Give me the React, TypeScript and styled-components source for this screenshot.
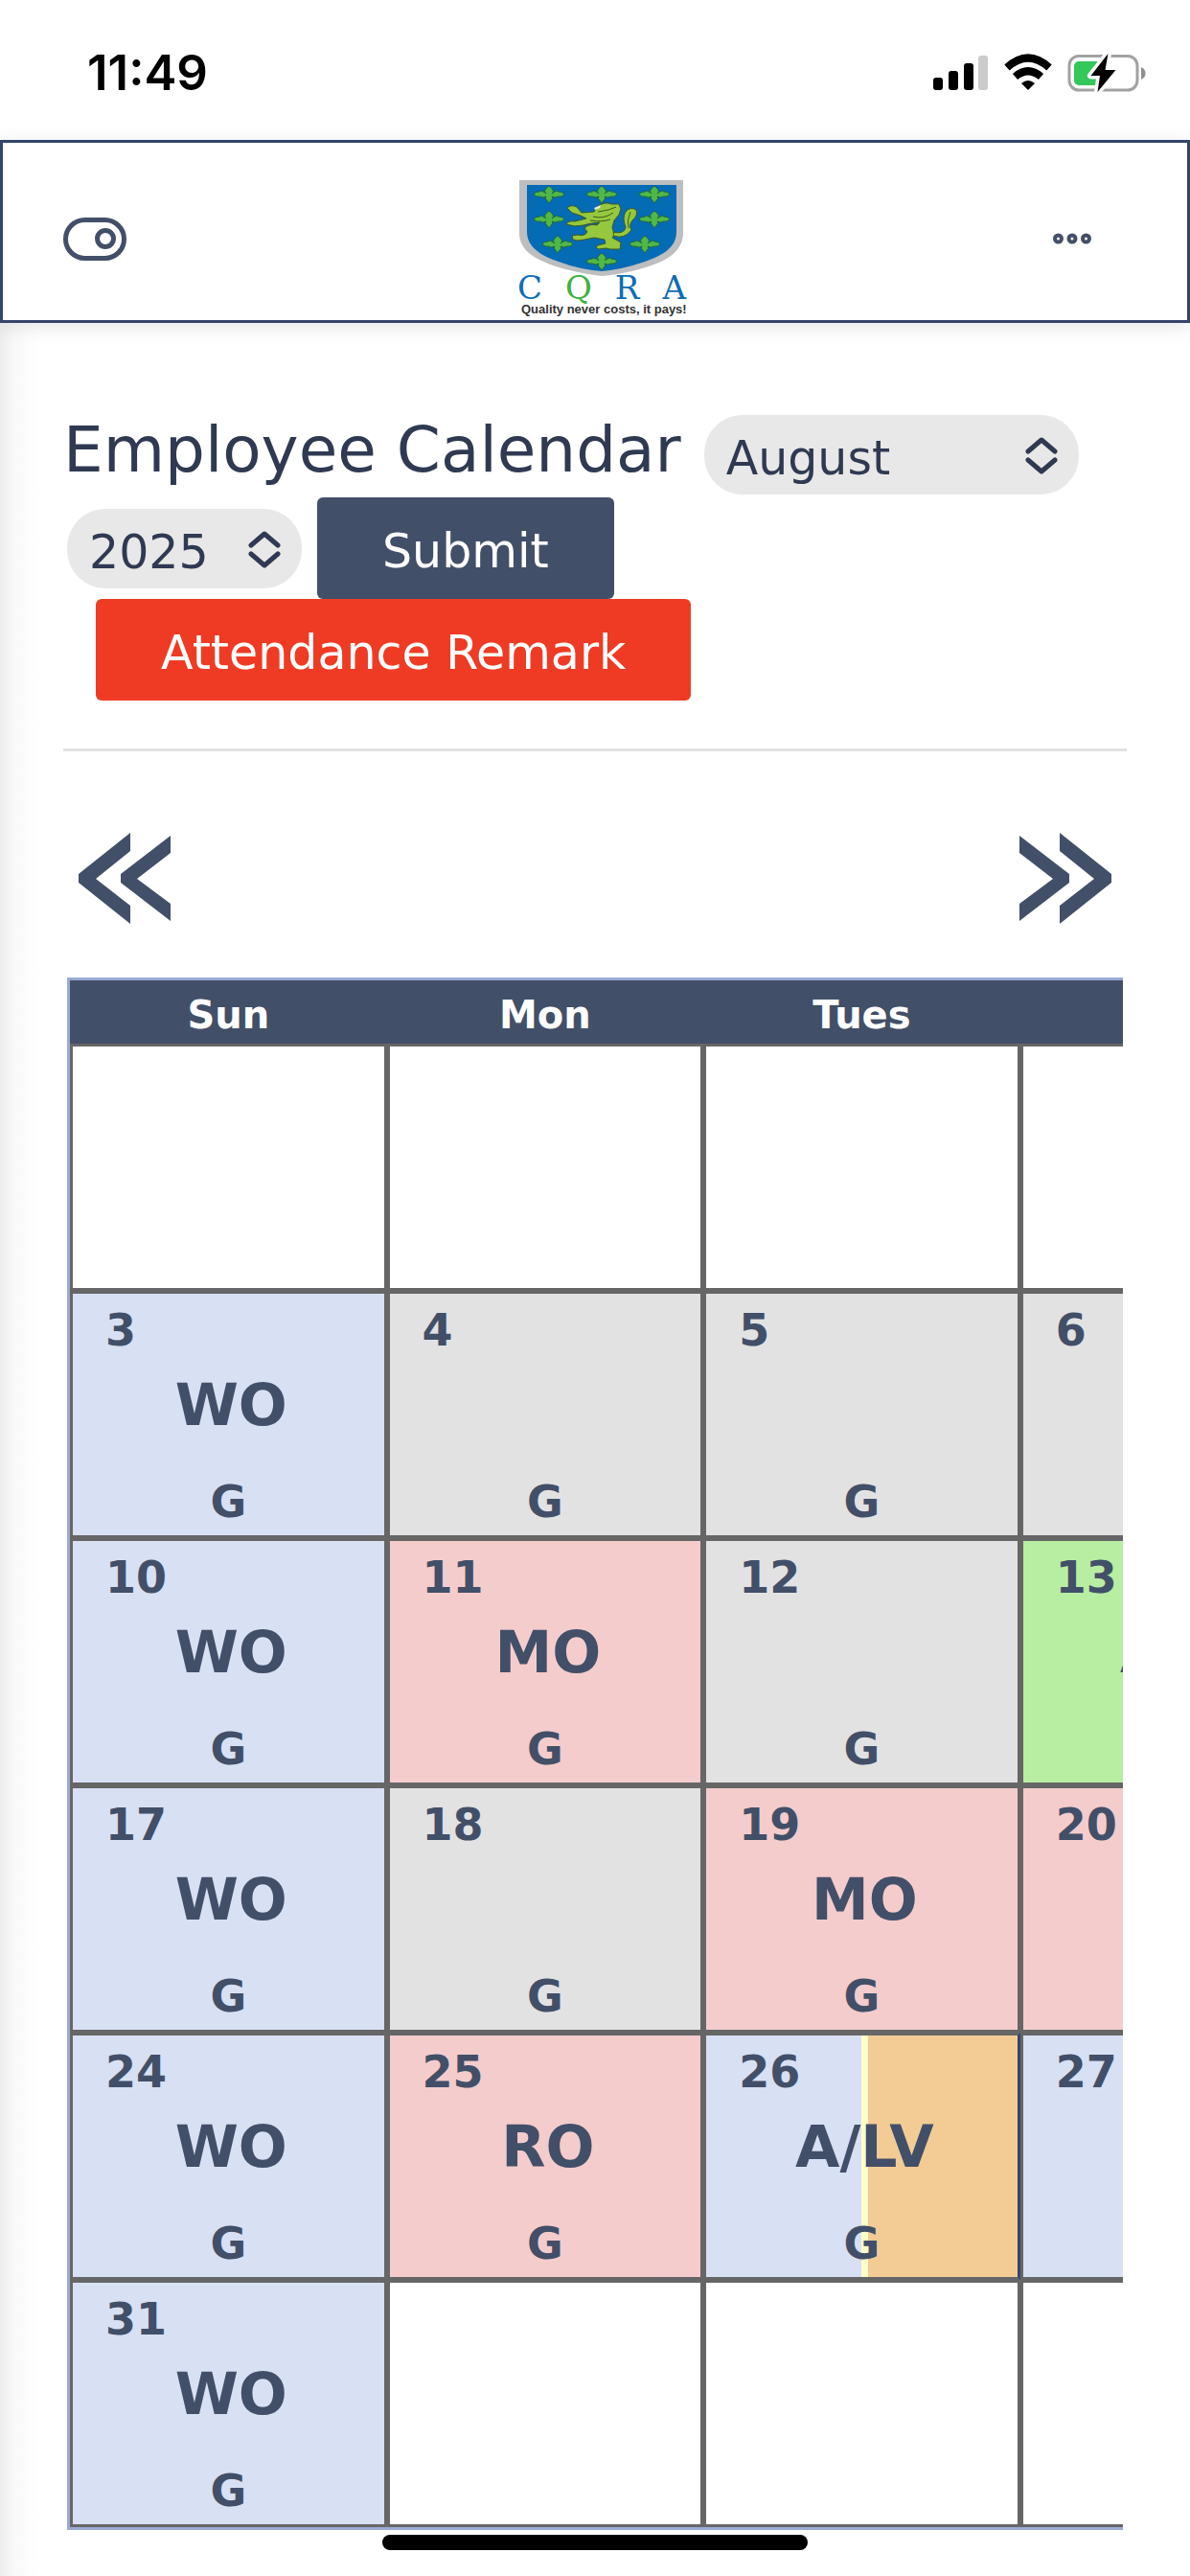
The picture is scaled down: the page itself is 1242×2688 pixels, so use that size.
import { useState } from "react";
import styled, { createGlobalStyle } from "styled-components";

const NAVY = "#424f68";
const INK = "#2f3a52";

const GlobalStyle = createGlobalStyle`
  * {
    box-sizing: border-box;
  }
  body {
    margin: 0;
    background: #fff;
    font-family: Verdana, "DejaVu Sans", sans-serif;
    color: ${INK};
  }
`;

const Page = styled.div`
  display: flex;
  flex-direction: column;
  min-height: 100vh;
`;

const StatusBar = styled.div`
  display: flex;
  align-items: center;
  justify-content: space-between;
  height: 146px;
  padding: 6px 46px 0 91px;
  color: #000;
`;

const Clock = styled.time`
  font: 600 51px/60px Inter, sans-serif;
`;

const Header = styled.header`
  position: relative;
  z-index: 1;
  display: grid;
  grid-template-columns: 1fr auto 1fr;
  align-items: center;
  padding-top: 38px;
  border: 3px solid #34456a;
  background: #fff;
  box-shadow: 0 4px 20px rgba(0, 0, 0, 0.1);
`;

const IconButton = styled.button<{ $end?: boolean }>`
  display: flex;
  justify-self: ${(props) => (props.$end ? "end" : "start")};
  margin: ${(props) => (props.$end ? "0 100px 24px 0" : "0 0 22px 63px")};
  padding: 0;
  border: 0;
  background: none;
`;

const Logo = styled.a`
  display: flex;
  flex-direction: column;
  width: 178px;
  height: 147px;
  margin-left: 16px;
  text-decoration: none;
`;

const LogoName = styled.span`
  display: flex;
  justify-content: space-between;
  width: 176px;
  height: 26px;
  font: 34px/22px "DejaVu Serif", serif;
  color: #0d6cb6;
`;

const LogoAccent = styled.span`
  color: #3fb13f;
`;

const LogoTagline = styled.span`
  padding-left: 4px;
  font: bold 13px/16px "Liberation Sans", sans-serif;
  white-space: nowrap;
  color: #333;
`;

const Main = styled.main`
  flex: 1;
  padding: 96px 66px 47px;
  background: linear-gradient(90deg, #ededed, #f8f8f8 14px, #fdfdfd 28px, #fff 45px);
`;

const FilterRow = styled.div<{ $align?: string }>`
  display: flex;
  align-items: ${(props) => props.$align || "center"};
  gap: ${(props) => (props.$align ? "24px" : "16px")};
  min-height: ${(props) => (props.$align ? "86px" : "106px")};
`;

const Title = styled.h1`
  margin: 0;
  font-size: 66px;
  font-weight: 400;
  line-height: 74px;
  white-space: nowrap;
`;

const SelectWrapper = styled.label<{ $width: string; $indent?: string }>`
  position: relative;
  width: ${(props) => props.$width};
  margin-left: ${(props) => props.$indent || "0"};

  svg {
    position: absolute;
    top: 22px;
    right: 22px;
    pointer-events: none;
  }
`;

const Select = styled.select`
  appearance: none;
  width: 100%;
  height: 83px;
  padding: 8px 60px 0 23px;
  border: 0;
  border-radius: 40px;
  background: #e8e8e8;
  font: inherit;
  font-size: 49px;
  color: ${INK};
`;

const Button = styled.button<{ $color: string; $indent?: string }>`
  height: 106px;
  margin-left: ${(props) => props.$indent || "0"};
  padding: 6px 68px 0;
  border: 0;
  border-radius: 6px;
  background: ${(props) => props.$color};
  font: inherit;
  font-size: 49px;
  color: #fff;
  white-space: nowrap;
`;

const Divider = styled.hr`
  height: 3px;
  margin: 50px 0 0;
  border: 0;
  background: #e2e2e2;
`;

const MonthNav = styled.nav`
  display: flex;
  justify-content: space-between;
  padding: 85px 16px 55px;
`;

const NavButton = styled.button`
  display: flex;
  padding: 0;
  border: 0;
  background: none;
`;

const CalendarScroll = styled.div`
  margin: 0 4px;
  overflow-x: auto;
  scrollbar-width: none;
`;

const Calendar = styled.table`
  width: 2320px;
  table-layout: fixed;
  border: 3px solid #9aaad4;
  border-collapse: separate;
  border-spacing: 0;
  font-weight: 700;
  color: ${NAVY};
`;

const DayHeading = styled.th`
  height: 66px;
  padding: 5px 0 0;
  background: ${NAVY};
  font-size: 40px;
  line-height: 60px;
  color: #fff;
`;

type Status = "none" | "off" | "present" | "miss" | "approved" | "half";

const backgrounds: Record<Status, string> = {
  none: "#fff",
  off: "#d8e0f3",
  present: "#e2e2e2",
  miss: "#f4cccc",
  approved: "#b8eea1",
  half: "linear-gradient(90deg, #d8e0f3 50%, #ffffc8 50%, #ffffc8 52%, #f3cc95 52%)",
};

const DayCell = styled.td<{ $status: Status }>`
  height: 258px;
  padding: 0;
  border: 3px solid #666;
  border-right-color: ${(props) => (props.$status === "half" ? "#34456a" : "#666")};
  background: ${(props) => backgrounds[props.$status]};
  background-origin: padding-box;
  vertical-align: top;
`;

const DayNumber = styled.div`
  height: 76px;
  padding-left: 34px;
  font-size: 46px;
  line-height: 76px;
`;

const DayCode = styled.div`
  height: 78px;
  padding-left: 6px;
  font-size: 60px;
  line-height: 80px;
  text-align: center;
`;

const DayShift = styled.div`
  height: 98px;
  padding-top: 28px;
  font-size: 46px;
  line-height: 70px;
  text-align: center;
`;

const HomeIndicator = styled.div`
  position: fixed;
  bottom: 27px;
  left: 0;
  right: 0;
  z-index: 2;
  width: 444px;
  height: 16px;
  margin: 0 auto;
  border-radius: 8px;
  background: #000;
`;

const StatusIcons = () => (
  <svg width="222" height="42" viewBox="973 55 222 42" aria-hidden="true">
    <rect x="973" y="81" width="10" height="13" rx="3" />
    <rect x="989" y="74" width="10" height="20" rx="3" />
    <rect x="1005" y="66" width="10" height="28" rx="3" />
    <rect x="1020" y="58" width="10" height="36" rx="3" fill="#cbcbcb" />
    <path d="M1050 70.500Q1072 50.500 1094 70.500" fill="none" stroke="#000" strokeWidth="8" />
    <path d="M1058.500 80Q1072 68.500 1085.500 80" fill="none" stroke="#000" strokeWidth="8" />
    <path d="M1065 87Q1072 81 1079 87L1072 94Z" />
    <rect x="1115" y="58.500" width="71" height="35.500" rx="10" fill="none" stroke="#a2a2a2" strokeWidth="3" />
    <path d="M1190 70Q1194.500 72 1194.500 76.500T1190 83Z" fill="#8f8f8f" />
    <rect x="1120" y="64" width="31" height="25" rx="5" fill="#34c759" />
    <path
      d="M1155.500 56L1137.500 79H1147L1144.500 96L1163.500 73H1152.500Z"
      stroke="#fff"
      strokeWidth="7"
      strokeLinejoin="round"
    />
    <path d="M1155.500 56L1137.500 79H1147L1144.500 96L1163.500 73H1152.500Z" />
  </svg>
);

const fleurs = [
  [33, 15],
  [88, 15],
  [143, 15],
  [33, 41],
  [143, 41],
  [42, 67],
  [133, 67],
  [88, 85],
];

const Crest = () => (
  <svg width="178" height="102" viewBox="0 -1 178 102" aria-hidden="true">
    <path
      d="M2 0H173V55C173 74 156 84 137 90Q112 98 88 100Q62 97 40 90C18 82 2 74 2 55Z"
      fill="#bcbec0"
    />
    <path
      d="M10 5H166V54C166 71 150 79 133 85Q110 93 88 95Q64 93 43 85C25 79 10 70 10 54Z"
      fill="#046bb5"
    />
    {fleurs.map(([x, y]) => (
      <path
        key={`${x}-${y}`}
        transform={`translate(${x} ${y})`}
        d="M0-9Q7-4 3-1Q8-5 10-3Q15-3 16 0Q13 3 10 2Q6 4 3 2Q5 5 3 5L0 9L-3 5Q-5 5-3 2Q-6 4-10 2Q-13 3-16 0Q-15-3-10-3Q-8-5-3-1Q-7-4 0-9Z"
        fill="#4fb848"
        stroke="#24663b"
        strokeWidth="1"
      />
    ))}
    <g fill="#95c83d" stroke="#3f5a1d" strokeWidth="1" strokeLinejoin="round">
      <path d="M98 54Q112 57 113 49Q109 39 113 33Q118 27 124 31Q126 37 120 42Q116 47 119 52Q112 62 100 58Z" />
      <path d="M84 27Q92 22 98 25L106 25L108 30L106 36L101 42L99 49Q102 58 99 60L108 65L107 72L97 72L92 71L85 72Q80 70 84 68L92 66L91 62L80 60L70 62Q62 64 58 62L57 58L63 57Q70 59 73 54L70 50Q75 45 83 47L86 44Q75 45 69 47L60 48L51 46Q53 42 60 43L72 40L66 37L57 34L52 29Q56 25 62 28L67 34L80 33Z" />
      <path d="M84 33L95 31L103 28M79 38Q90 41 100 34M76 42Q88 44 97 41M118 33Q114 42 116 50" fill="none" />
    </g>
    <path d="M80 29L87 26L86 29L81 31Z" fill="#e8e8e8" />
  </svg>
);

const Updown = () => (
  <svg width="34" height="40" viewBox="0 0 34 40" fill="none" stroke={INK} strokeWidth="5" strokeLinecap="round" strokeLinejoin="round" aria-hidden="true">
    <path d="M3 16L17 4L31 16M3 25L17 37L31 25" />
  </svg>
);

const DoubleArrow = ({ flip }: { flip?: boolean }) => (
  <svg width="96" height="96" viewBox="0 0 96 96" fill={NAVY} aria-hidden="true">
    <g transform={flip ? "translate(96 0) scale(-1 1)" : undefined}>
      <path d="M54 0V19L18 48L54 76V95L0 52V43Z" />
      <path d="M96 3V21L61 48L96 74V92L44 52V43Z" />
    </g>
  </svg>
);

const dayNames = ["Sun", "Mon", "Tues", "Wed", "Thur", "Fri", "Sat"];
const months = [
  "January", "February", "March", "April", "May", "June",
  "July", "August", "September", "October", "November", "December",
];

const marks: Record<number, { status: Status; code: string }> = {
  11: { status: "miss", code: "MO" },
  13: { status: "approved", code: "A/M" },
  19: { status: "miss", code: "MO" },
  20: { status: "miss", code: "" },
  25: { status: "miss", code: "RO" },
  26: { status: "half", code: "A/LV" },
  27: { status: "off", code: "" },
};

// 1 August 2025 falls on a Friday
const FIRST_DAY = 5;
const weeks = Array.from({ length: 6 }, (_, week) =>
  Array.from({ length: 7 }, (_, day) => {
    const date = week * 7 + day - FIRST_DAY + 1;
    return date > 0 && date <= 31 ? date : null;
  })
);

const Day = ({ date, sunday }: { date: number | null; sunday: boolean }) => {
  if (!date) {
    return <DayCell $status="none" />;
  }

  const mark =
    marks[date] ||
    (sunday ? { status: "off", code: "WO" } : { status: "present", code: "" });

  return (
    <DayCell $status={mark.status as Status}>
      <DayNumber>{date}</DayNumber>
      <DayCode>{mark.code}</DayCode>
      <DayShift>G</DayShift>
    </DayCell>
  );
};

const App = () => {
  const [month, setMonth] = useState("August");
  const [year, setYear] = useState("2025");

  return (
    <Page>
      <GlobalStyle />
      <StatusBar>
        <Clock>11:49</Clock>
        <StatusIcons />
      </StatusBar>
      <Header>
        <IconButton type="button" aria-label="Toggle menu">
          <svg width="66" height="45" viewBox="0 0 66 45" fill="none" stroke={NAVY} strokeWidth="5">
            <rect x="2.500" y="2.500" width="61" height="40" rx="20" />
            <circle cx="44" cy="22" r="8.500" />
          </svg>
        </IconButton>
        <Logo href="#home">
          <Crest />
          <LogoName>
            <span>C</span>
            <LogoAccent>Q</LogoAccent>
            <span>R</span>
            <span>A</span>
          </LogoName>
          <LogoTagline>Quality never costs, it pays!</LogoTagline>
        </Logo>
        <IconButton type="button" $end aria-label="More options">
          <svg width="40" height="12" viewBox="0 0 40 12" fill="none" stroke={NAVY} strokeWidth="4">
            <circle cx="5.500" cy="6" r="3.500" />
            <circle cx="20" cy="6" r="3.500" />
            <circle cx="34.500" cy="6" r="3.500" />
          </svg>
        </IconButton>
      </Header>
      <Main>
        <form onSubmit={(e) => e.preventDefault()}>
          <FilterRow $align="flex-start">
            <Title>Employee Calendar</Title>
            <SelectWrapper $width="391px">
              <Select aria-label="Month" value={month} onChange={(e) => setMonth(e.target.value)}>
                {months.map((name) => (
                  <option key={name}>{name}</option>
                ))}
              </Select>
              <Updown />
            </SelectWrapper>
          </FilterRow>
          <FilterRow>
            <SelectWrapper $width="245px" $indent="4px">
              <Select aria-label="Year" value={year} onChange={(e) => setYear(e.target.value)}>
                <option>2024</option>
                <option>2025</option>
                <option>2026</option>
              </Select>
              <Updown />
            </SelectWrapper>
            <Button type="submit" $color={NAVY}>
              Submit
            </Button>
          </FilterRow>
          <FilterRow>
            <Button type="button" $color="#ef3b24" $indent="34px">
              Attendance Remark
            </Button>
          </FilterRow>
        </form>
        <Divider />
        <MonthNav aria-label="Months">
          <NavButton type="button" aria-label="Previous month">
            <DoubleArrow />
          </NavButton>
          <NavButton type="button" aria-label="Next month">
            <DoubleArrow flip />
          </NavButton>
        </MonthNav>
        <CalendarScroll>
          <Calendar>
            <thead>
              <tr>
                {dayNames.map((name) => (
                  <DayHeading key={name} scope="col">
                    {name}
                  </DayHeading>
                ))}
              </tr>
            </thead>
            <tbody>
              {weeks.map((week, index) => (
                <tr key={index}>
                  {week.map((date, day) => (
                    <Day key={day} date={date} sunday={day === 0} />
                  ))}
                </tr>
              ))}
            </tbody>
          </Calendar>
        </CalendarScroll>
      </Main>
      <HomeIndicator />
    </Page>
  );
};

export default App;
